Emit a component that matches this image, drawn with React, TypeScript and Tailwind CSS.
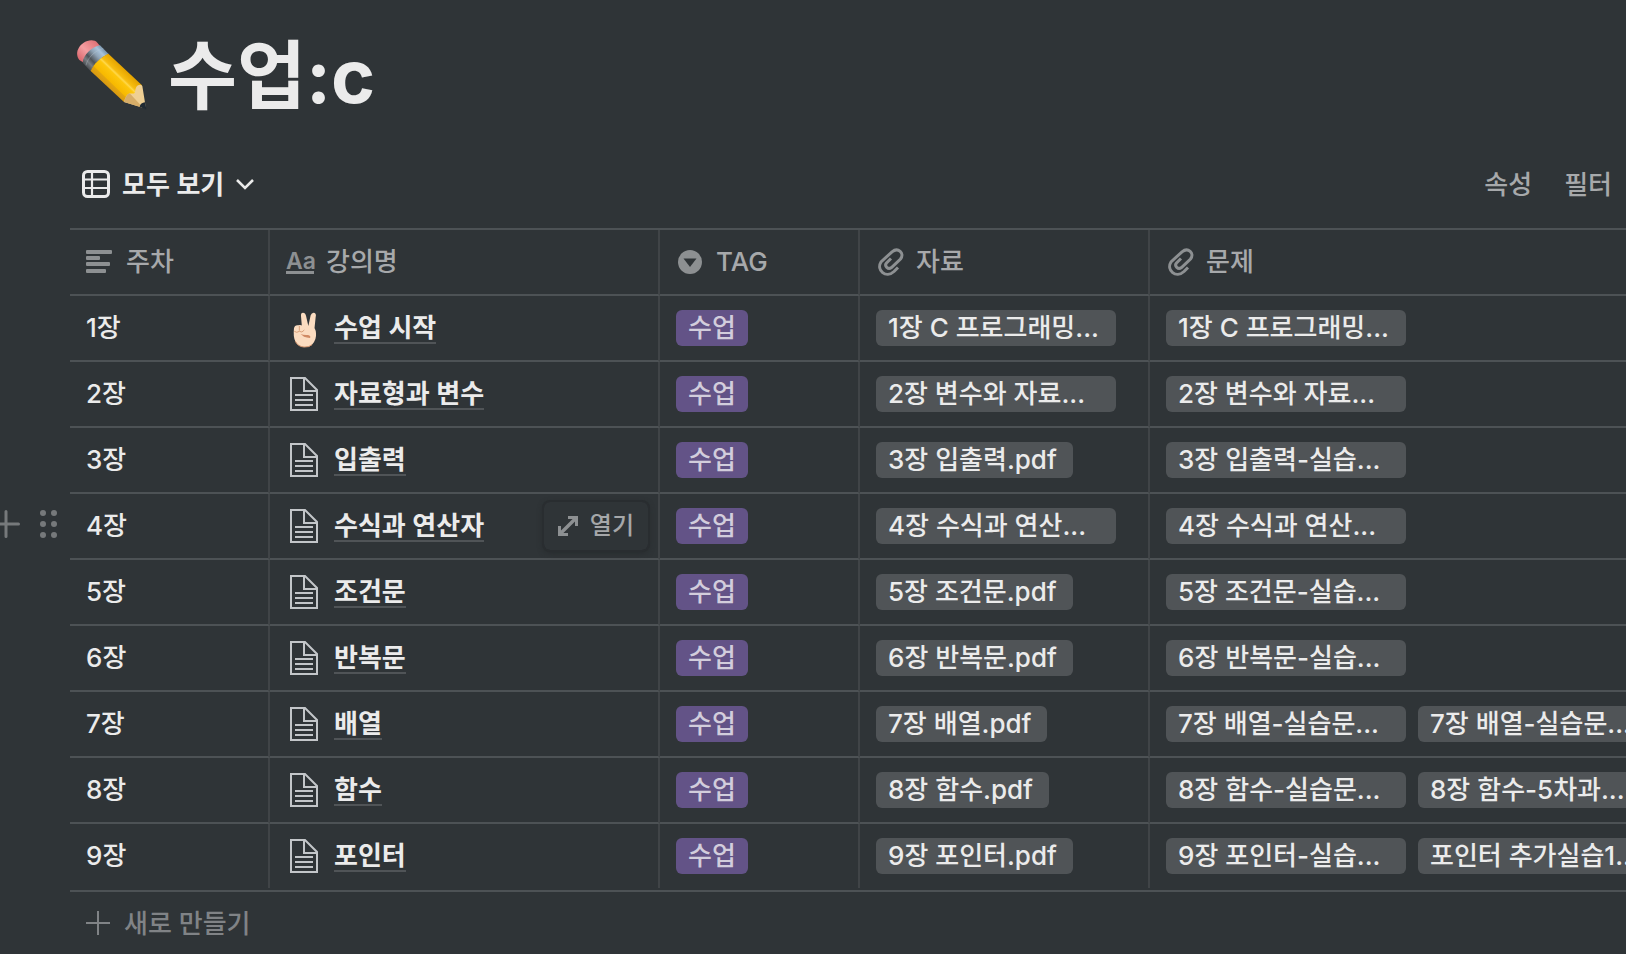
import { FC, ReactNode } from "react";

type Lecture = {
    week: string;
    title: string;
    emoji?: boolean;
    hovered?: boolean;
    files: string[];
    problems: string[];
};

const lectures: Lecture[] = [
    { week: "1장", title: "수업 시작", emoji: true, files: ["1장 C 프로그래밍..."], problems: ["1장 C 프로그래밍..."] },
    { week: "2장", title: "자료형과 변수", files: ["2장 변수와 자료..."], problems: ["2장 변수와 자료..."] },
    { week: "3장", title: "입출력", files: ["3장 입출력.pdf"], problems: ["3장 입출력-실습..."] },
    { week: "4장", title: "수식과 연산자", hovered: true, files: ["4장 수식과 연산..."], problems: ["4장 수식과 연산..."] },
    { week: "5장", title: "조건문", files: ["5장 조건문.pdf"], problems: ["5장 조건문-실습..."] },
    { week: "6장", title: "반복문", files: ["6장 반복문.pdf"], problems: ["6장 반복문-실습..."] },
    { week: "7장", title: "배열", files: ["7장 배열.pdf"], problems: ["7장 배열-실습문...", "7장 배열-실습문..."] },
    { week: "8장", title: "함수", files: ["8장 함수.pdf"], problems: ["8장 함수-실습문...", "8장 함수-5차과..."] },
    { week: "9장", title: "포인터", files: ["9장 포인터.pdf"], problems: ["9장 포인터-실습...", "포인터 추가실습1..."] },
];

const PencilIcon: FC = () => (
    <svg width="72" height="72" viewBox="12 18 216 216" className="shrink-0" aria-hidden="true">
        <defs>
            <linearGradient id="paint" gradientUnits="userSpaceOnUse" x1="106" y1="156" x2="156" y2="104">
                <stop offset="0" stopColor="#d99a12" />
                <stop offset="0.18" stopColor="#e3a60e" />
                <stop offset="0.22" stopColor="#f7b900" />
                <stop offset="0.55" stopColor="#fdc60c" />
                <stop offset="0.62" stopColor="#ffd84a" />
                <stop offset="0.7" stopColor="#f7bd10" />
                <stop offset="1" stopColor="#e5a400" />
            </linearGradient>
            <linearGradient id="metal" gradientUnits="userSpaceOnUse" x1="40" y1="98" x2="98" y2="44">
                <stop offset="0" stopColor="#44484c" />
                <stop offset="0.2" stopColor="#777d82" />
                <stop offset="0.35" stopColor="#4d5257" />
                <stop offset="0.6" stopColor="#8fa3b5" />
                <stop offset="0.8" stopColor="#a9c3da" />
                <stop offset="1" stopColor="#6f8ba3" />
            </linearGradient>
            <linearGradient id="rubber" gradientUnits="userSpaceOnUse" x1="20" y1="76" x2="74" y2="22">
                <stop offset="0" stopColor="#d9666c" />
                <stop offset="0.45" stopColor="#f59ea1" />
                <stop offset="1" stopColor="#df7075" />
            </linearGradient>
        </defs>
        <path d="M22 78C8 60 18 38 34 27C48 17 68 16 76 26L86 38L38 88Z" fill="url(#rubber)" />
        <path d="M32 86C34 62 60 38 84 34L110 60C92 68 68 86 56 112Z" fill="url(#metal)" />
        <path d="M42 94C46 72 70 48 94 44" fill="none" stroke="#c0ccd5" strokeWidth="2" opacity="0.5" />
        <path d="M56 111C64 90 88 68 109 59L210 154L186 200L156 204Z" fill="url(#paint)" />
        <path d="M156 204Q162 182 173 178Q184 180 189 176Q190 158 198 154Q206 150 211 156L222 224L208 220Z" fill="#efcf93" />
        <path d="M156 204Q162 182 173 178L214 222Z" fill="#d7ad68" />
        <path d="M203 218Q206 206 219 205L223 224Q222 227 218 225Z" fill="#202a33" />
    </svg>
);

const VictoryIcon: FC = () => (
    <svg width="28" height="40" viewBox="18 6 84 120" aria-hidden="true">
        <path d="M54 66L51 30Q50 20 57 20Q64 20 66 29L73 60L80 28Q83 19 90 20Q98 22 95 33L91 72Z" fill="#fbdcc0" />
        <path d="M30 66Q32 56 42 58Q52 54 60 62L84 62Q96 66 96 82Q98 102 84 116Q76 124 60 123Q42 122 34 106Q27 92 30 66Z" fill="#fbdcc0" />
        <path d="M34 106Q42 122 60 123Q76 124 84 116" fill="none" stroke="#d99a72" strokeWidth="3" />
        <path d="M46 60V74M31 76Q38 82 46 76Q54 82 61 72" fill="none" stroke="#d9a17a" strokeWidth="3" />
        <path d="M50 84Q58 88 72 87Q82 90 78 96Q68 94 60 92" fill="#d08a63" />
    </svg>
);

const PageIcon: FC = () => (
    <svg width="28" height="34" viewBox="0 0 28 34" fill="none" stroke="#c3c6c9" strokeWidth="2" aria-hidden="true">
        <path d="M1 1H15L27 13V33H1Z M14 1V14H27" />
        <path d="M5 18H23 M5 23H23 M5 28H23" />
    </svg>
);

const TableIcon: FC = () => (
    <svg width="28" height="28" viewBox="0 0 28 28" fill="none" stroke="currentColor" aria-hidden="true">
        <rect x="1.5" y="1.5" width="25" height="25" rx="4" strokeWidth="3" />
        <path d="M2 9.5H26 M2 18H26 M10 2V26" strokeWidth="2.2" />
    </svg>
);

const ChevronIcon: FC = () => (
    <svg width="18" height="12" viewBox="0 0 18 12" fill="none" stroke="currentColor" strokeWidth="2.5" aria-hidden="true">
        <path d="M1 2L9 10L17 2" />
    </svg>
);

const TextIcon: FC = () => (
    <svg width="28" height="24" viewBox="0 0 28 24" fill="currentColor" aria-hidden="true">
        <rect width="26" height="4" rx="1" />
        <rect y="6" width="14" height="4" rx="1" />
        <rect y="12" width="24" height="4" rx="1" />
        <rect y="19" width="20" height="4" rx="1" />
    </svg>
);

const TitleIcon: FC = () => (
    <span className="w-7 border-b-3 border-current text-[23px] leading-5 font-semibold" aria-hidden="true">
        Aa
    </span>
);

const SelectIcon: FC = () => (
    <svg width="24" height="24" viewBox="0 0 24 24" aria-hidden="true">
        <circle cx="12" cy="12" r="12" fill="currentColor" />
        <path d="M5.5 8.5H18.5L12 17Z" fill="#2f3437" />
    </svg>
);

const ClipIcon: FC = () => (
    <svg width="26" height="28" viewBox="0 0 26 28" fill="none" stroke="currentColor" strokeWidth="3" aria-hidden="true">
        <path d="M20 19.5L16 23.5C8 31 -2 22 3 14L14 3.8C20 -1 27 5 22.5 11L13.5 19.5C10 22 6 18 8.5 15L13 10.5" />
    </svg>
);

const OpenIcon: FC = () => (
    <svg width="20" height="20" viewBox="0 0 20 20" aria-hidden="true">
        <path d="M10 0H20V10H17V5.4L5.4 17H10V20H0V10H3V14.6L14.6 3H10Z" fill="#8d9092" />
    </svg>
);

const PlusIcon: FC = () => (
    <svg width="28" height="28" viewBox="0 0 28 28" stroke="currentColor" strokeWidth="3" strokeLinecap="round" aria-hidden="true">
        <path d="M1.5 14H26.5 M14 1.5V26.5" />
    </svg>
);

const DragIcon: FC = () => (
    <svg width="18" height="28" viewBox="0 0 18 28" fill="currentColor" aria-hidden="true">
        {[3, 14, 25].map((y) => (
            <g key={y}>
                <circle cx="3" cy={y} r="3" />
                <circle cx="14" cy={y} r="3" />
            </g>
        ))}
    </svg>
);

const columns: { name: string; icon: ReactNode; width: string; spacing: string }[] = [
    { name: "주차", icon: <TextIcon />, width: "w-[200px]", spacing: "gap-3 pl-4" },
    { name: "강의명", icon: <TitleIcon />, width: "w-[390px]", spacing: "gap-3 pl-4" },
    { name: "TAG", icon: <SelectIcon />, width: "w-[200px]", spacing: "gap-3.5 pl-4.5" },
    { name: "자료", icon: <ClipIcon />, width: "w-[290px]", spacing: "gap-3 pl-4.5" },
    { name: "문제", icon: <ClipIcon />, width: "", spacing: "gap-3 pl-4.5" },
];

const FileChip: FC<{ name: string }> = ({ name }) => (
    <a
        href="#"
        className={`block h-9 shrink-0 rounded-md bg-[#505457] pr-4 pl-3 leading-9 whitespace-nowrap ${name.endsWith("...") ? "w-[240px]" : ""}`}
    >
        {name}
    </a>
);

const LectureRow: FC<{ lecture: Lecture }> = ({ lecture }) => {
    const cell =
        "h-[66px] border-r-2 border-b-2 border-r-[#404447] border-b-[#4d5255] p-0 last:border-r-0 group-last:h-16 group-last:border-b-0";

    return (
        <tr className="group">
            <td className={`relative ${cell}`}>
                {lecture.hovered && (
                    <div className="absolute top-0 -left-[78px] flex h-[60px] items-center gap-5 text-[#76797b]">
                        <button type="button" aria-label="추가">
                            <PlusIcon />
                        </button>
                        <button type="button" aria-label="이동">
                            <DragIcon />
                        </button>
                    </div>
                )}
                <div className="px-4 leading-9">{lecture.week}</div>
            </td>
            <td className={`relative ${cell}`}>
                <div className="flex items-center gap-4 pl-5">
                    <span className="flex w-7 justify-center">{lecture.emoji ? <VictoryIcon /> : <PageIcon />}</span>
                    <a href="#" className="mt-0.5 border-b-2 border-[#505457] leading-7 font-semibold">
                        {lecture.title}
                    </a>
                </div>
                {lecture.hovered && (
                    <button
                        type="button"
                        className="absolute top-2 right-2.5 flex h-12 items-center gap-3 rounded-md px-3.5 text-2xl text-[#a5a7a9] shadow-[0_0_0_2px_#292d30,0_2px_6px_#24282a]"
                    >
                        <OpenIcon />
                        열기
                    </button>
                )}
            </td>
            <td className={cell}>
                <div className="flex px-4">
                    <span className="h-9 rounded-md bg-[#635387] px-3 leading-9 text-[#d2cddc]">수업</span>
                </div>
            </td>
            <td className={cell}>
                <div className="flex px-4">
                    {lecture.files.map((file) => (
                        <FileChip key={file} name={file} />
                    ))}
                </div>
            </td>
            <td className={cell}>
                <div className="flex gap-3 overflow-hidden pl-4">
                    {lecture.problems.map((file, i) => (
                        <FileChip key={i} name={file} />
                    ))}
                </div>
            </td>
        </tr>
    );
};

const App: FC = (): ReactNode => {
    return (
        <main className="min-h-screen overflow-hidden bg-[#2f3437] pl-[70px] font-[Inter,'Noto_Sans_CJK_KR',sans-serif] text-[26px] font-medium text-[#ebebeb]">
            <header className="flex items-center gap-5 pt-6 pl-1.5">
                <PencilIcon />
                <h1 className="text-[75px] leading-[104px] font-bold">수업:c</h1>
            </header>

            {/* View selector and table options */}
            <div className="mt-3.5 mb-0.5 flex h-[84px] items-center justify-between pr-3.5 pl-3">
                <button type="button" className="flex items-center gap-3 font-semibold">
                    <TableIcon />
                    모두 보기
                    <ChevronIcon />
                </button>
                <div className="flex gap-8 text-[#a7a9ab]">
                    <button type="button">속성</button>
                    <button type="button">필터</button>
                </div>
            </div>

            <div className="border-b-2 border-[#4d5255] pb-0.5">
                <table className="w-full table-fixed border-separate border-spacing-0 border-t-2 border-[#4d5255]">
                    <thead>
                        <tr className="text-left text-[#a7a9ab]">
                            {columns.map((col) => (
                                <th
                                    key={col.name}
                                    scope="col"
                                    className={`h-[66px] border-r-2 border-b-2 border-r-[#404447] border-b-[#4d5255] p-0 font-medium last:border-r-0 ${col.width}`}
                                >
                                    <div className={`flex items-center leading-9 ${col.spacing}`}>
                                        <span className="flex text-[#8d9092]">{col.icon}</span>
                                        {col.name}
                                    </div>
                                </th>
                            ))}
                        </tr>
                    </thead>
                    <tbody>
                        {lectures.map((lecture) => (
                            <LectureRow key={lecture.week} lecture={lecture} />
                        ))}
                    </tbody>
                </table>
            </div>

            <button type="button" className="flex h-[62px] items-center gap-3.5 pl-4 text-[#808386]">
                <svg width="24" height="24" viewBox="0 0 24 24" stroke="currentColor" strokeWidth="2" aria-hidden="true">
                    <path d="M0 12H24 M12 0V24" />
                </svg>
                새로 만들기
            </button>
        </main>
    );
};

export default App;
